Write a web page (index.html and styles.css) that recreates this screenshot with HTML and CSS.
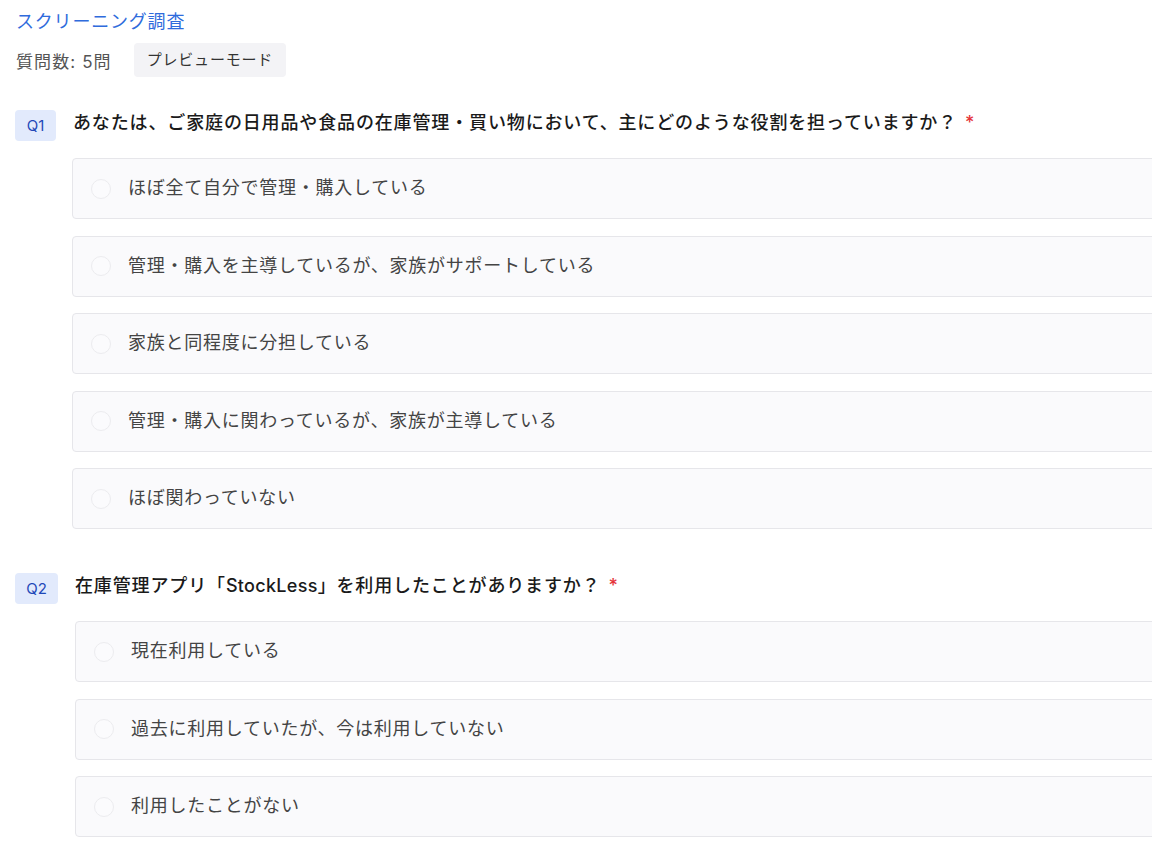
FILE: index.html
```html
<!DOCTYPE html>
<html lang="ja">
<head>
<meta charset="utf-8">
<title>スクリーニング調査</title>
<link rel="stylesheet" href="styles.css">
</head>
<body>
<div class="page">
  <h1 class="title">スクリーニング調査</h1>
  <div class="meta">
    <span class="count">質問数: 5問</span>
    <span class="mode">プレビューモード</span>
  </div>

  <section class="question">
    <div class="q-head">
      <span class="q-badge">Q1</span>
      <span class="q-text">あなたは、ご家庭の日用品や食品の在庫管理・買い物において、主にどのような役割を担っていますか？<span class="req">*</span></span>
    </div>
    <div class="options">
      <label class="option"><span class="radio"></span><span class="opt-text">ほぼ全て自分で管理・購入している</span></label>
      <label class="option"><span class="radio"></span><span class="opt-text">管理・購入を主導しているが、家族がサポートしている</span></label>
      <label class="option"><span class="radio"></span><span class="opt-text">家族と同程度に分担している</span></label>
      <label class="option"><span class="radio"></span><span class="opt-text">管理・購入に関わっているが、家族が主導している</span></label>
      <label class="option"><span class="radio"></span><span class="opt-text">ほぼ関わっていない</span></label>
    </div>
  </section>

  <section class="question question-2">
    <div class="q-head">
      <span class="q-badge">Q2</span>
      <span class="q-text">在庫管理アプリ「<span class="latin">StockLess</span>」を利用したことがありますか？<span class="req">*</span></span>
    </div>
    <div class="options">
      <label class="option"><span class="radio"></span><span class="opt-text">現在利用している</span></label>
      <label class="option"><span class="radio"></span><span class="opt-text">過去に利用していたが、今は利用していない</span></label>
      <label class="option"><span class="radio"></span><span class="opt-text">利用したことがない</span></label>
    </div>
  </section>
</div>
</body>
</html>
```

FILE: styles.css
```css
html, body {
  margin: 0;
  padding: 0;
  background: #ffffff;
  overflow: hidden;
}

body {
  font-family: "Inter", "Noto Sans CJK JP", sans-serif;
  color: #222;
}

.page {
  padding: 8px 0 0 16px;
  width: 1300px;
}

.title {
  margin: 0;
  font-size: 18px;
  line-height: 28px;
  font-weight: 400;
  color: #2f6bdc;
  letter-spacing: 0.8px;
}

.meta {
  margin-top: 7px;
  display: flex;
  align-items: center;
  gap: 22px;
}

.count {
  font-size: 17px;
  color: #555;
  letter-spacing: 1.1px;
}

.mode {
  background: #f3f3f6;
  color: #333;
  font-size: 15px;
  letter-spacing: 0.8px;
  line-height: 34px;
  height: 34px;
  padding: 0 13px 0 13px;
  border-radius: 4px;
}

.question {
  margin-top: 33px;
}

.question-2 {
  margin-top: 44px;
}

.q-head {
  display: flex;
  align-items: flex-start;
  gap: 17px;
  margin-left: -1px;
}

.q-badge {
  width: 41px;
  height: 31px;
  line-height: 31px;
  text-align: center;
  background: #e2eafc;
  color: #1f48b8;
  font-size: 15px;
  border-radius: 4px;
  flex: none;
}

.question-2 .q-badge {
  width: 43px;
}

.q-text {
  font-size: 18px;
  line-height: 26px;
  font-weight: 500;
  color: #1a1a1a;
  letter-spacing: 0.86px;
}

.latin {
  letter-spacing: 0.3px;
}

.req {
  color: #e5343a;
  margin-left: 8px;
  font-weight: 500;
}

.options {
  margin-top: 17px;
  margin-left: 56px;
  display: flex;
  flex-direction: column;
  gap: 16.5px;
}

.question-2 .options {
  margin-left: 59px;
}

.option {
  display: flex;
  align-items: center;
  height: 61px;
  box-sizing: border-box;
  background: #fafafc;
  border: 1px solid #e6e6ea;
  border-radius: 4px;
  padding-left: 18px;
  gap: 17px;
}

.radio {
  width: 20px;
  height: 20px;
  box-sizing: border-box;
  border: 1.5px solid #ececef;
  border-radius: 50%;
  background: #fbfbfd;
  flex: none;
}

.opt-text {
  font-size: 18px;
  line-height: 24px;
  padding-bottom: 1px;
  color: #444;
  letter-spacing: 0.75px;
}
```
